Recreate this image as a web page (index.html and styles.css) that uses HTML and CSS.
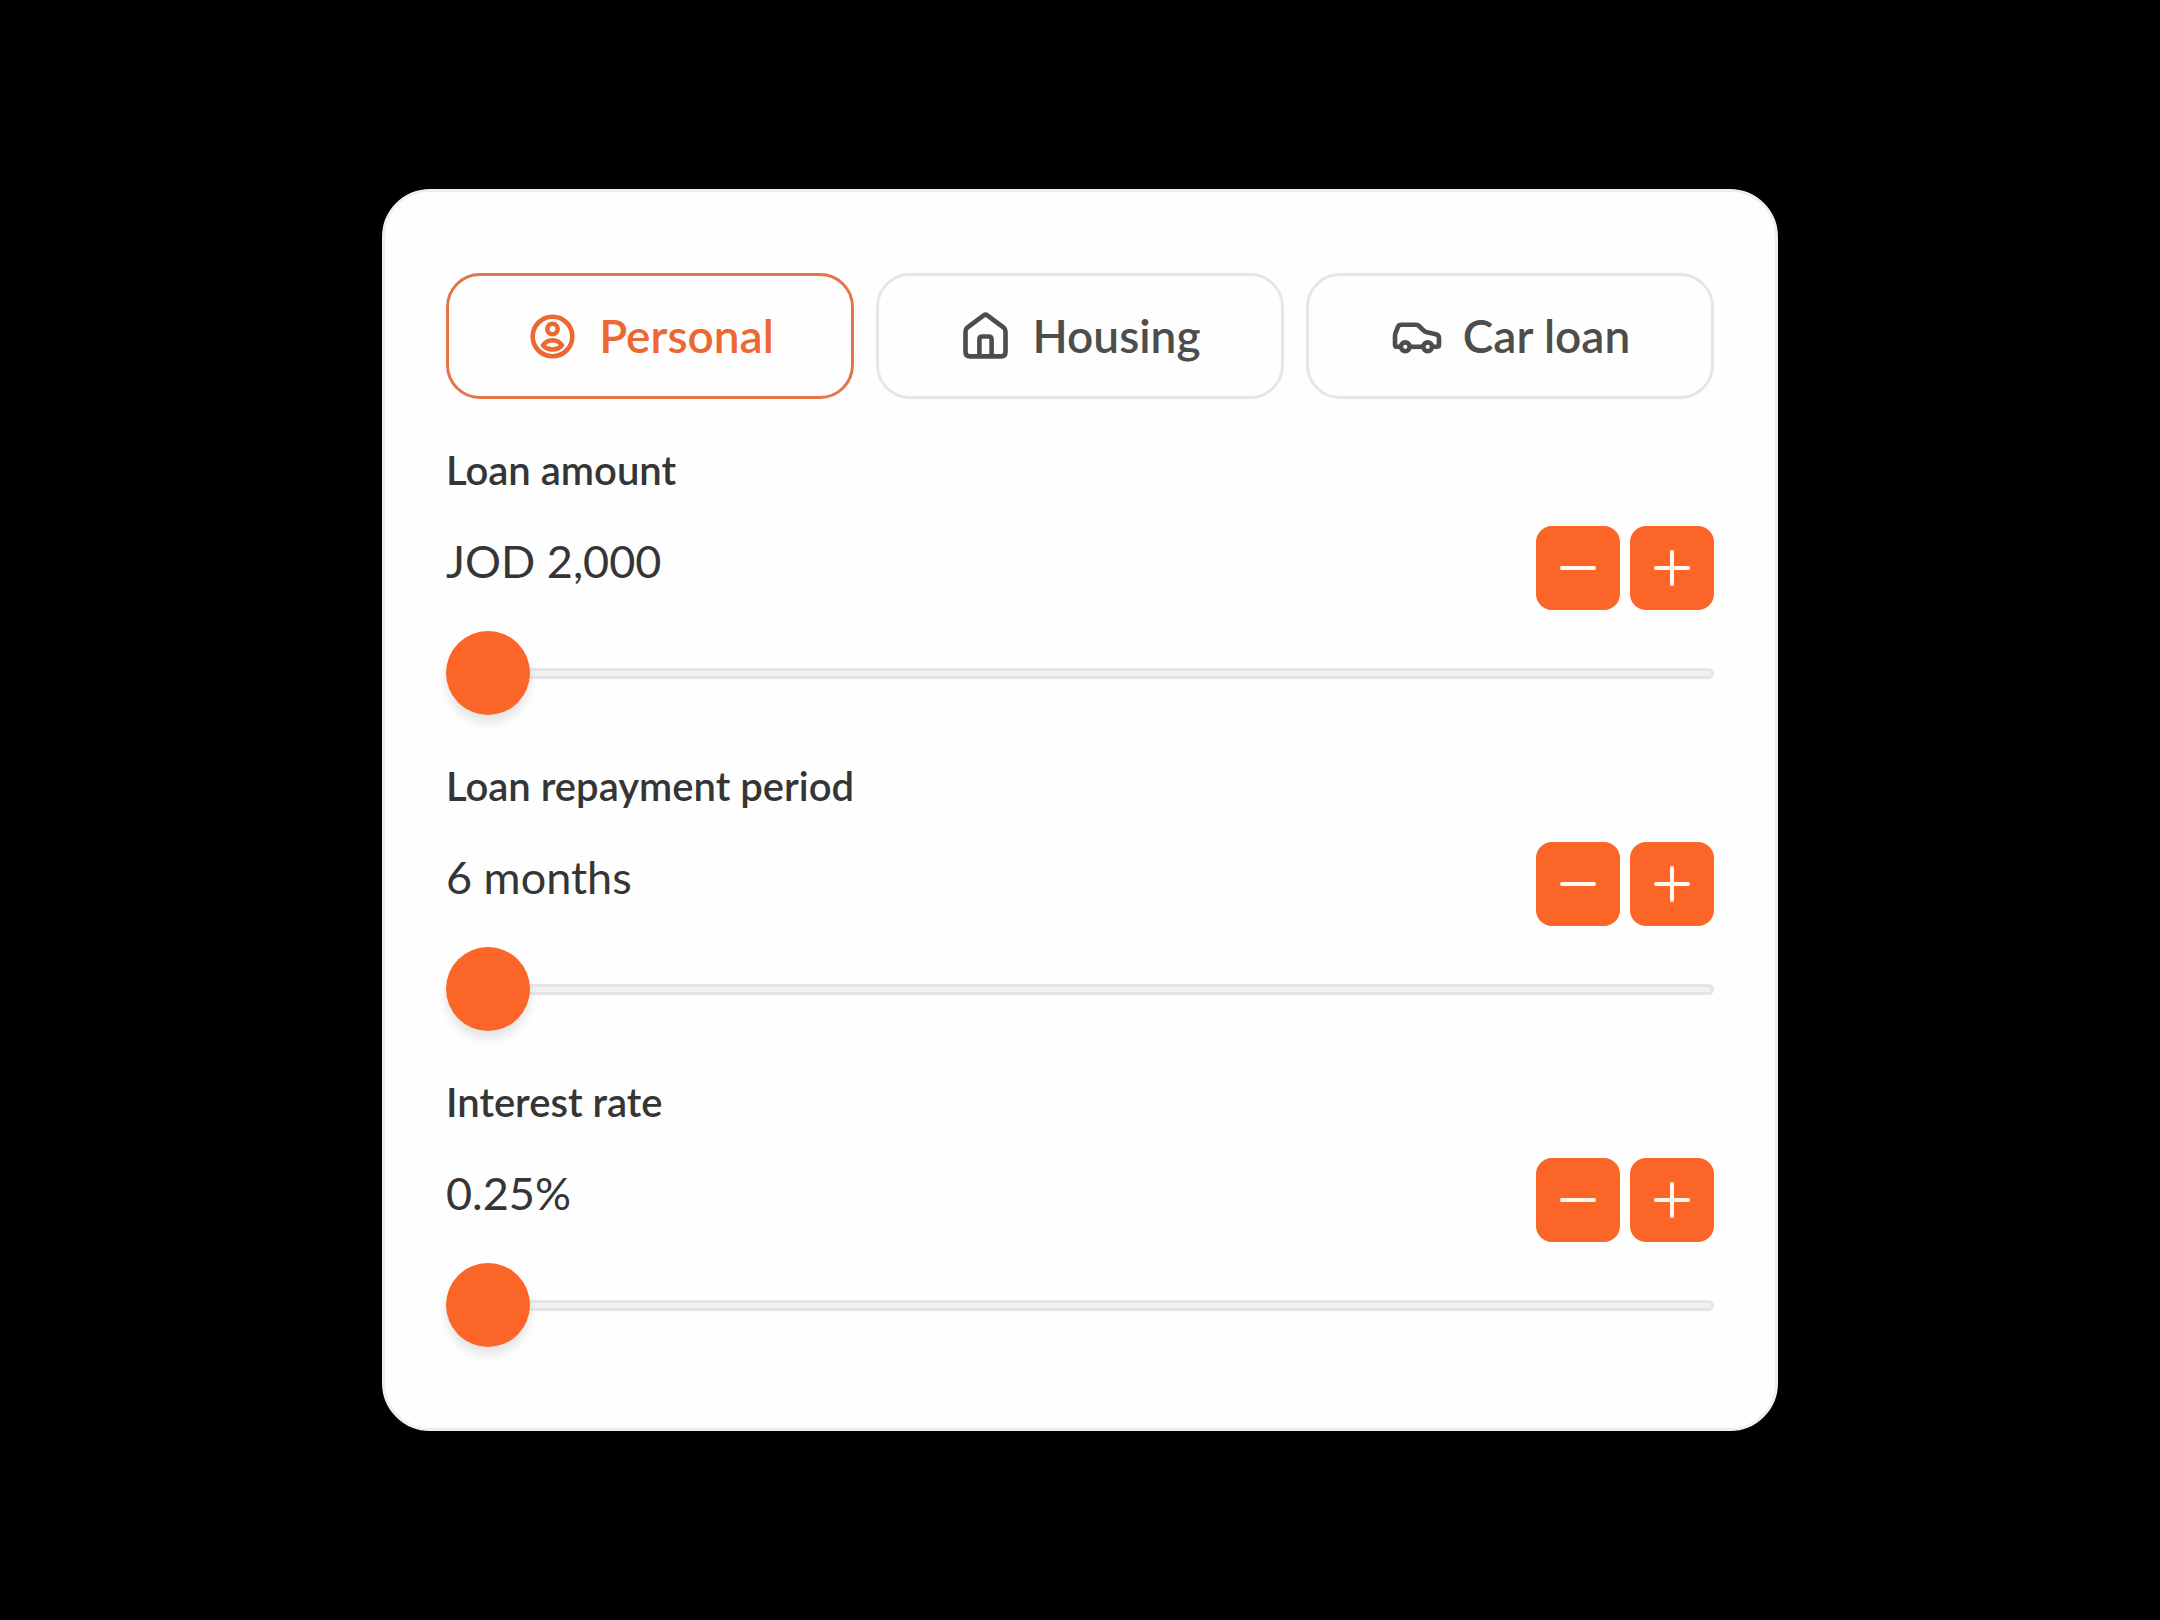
FILE: index.html
```html
<!DOCTYPE html>
<html lang="en">
<head>
<meta charset="UTF-8">
<meta name="viewport" content="width=device-width, initial-scale=1.0">
<title>Loan calculator</title>
<link rel="stylesheet" href="styles.css">
</head>
<body>

<main class="card">
  <div class="tabs">
    <button type="button" class="tab active">
      <svg class="icon" viewBox="0 0 53 53">
        <circle cx="26.5" cy="26.5" r="19.8"/>
        <circle cx="26.5" cy="19" r="5.2"/>
        <path d="M17 35.3C21.5 28.6 31.5 28.6 36 35.3C31.5 40.8 21.5 40.8 17 35.3Z"/>
      </svg>
      Personal
    </button>
    <button type="button" class="tab">
      <svg class="icon" viewBox="0 0 53 53">
        <path d="M6.5 21.5C6.5 19.8 7 18.6 8.3 17.6L24.7 5.4Q26.5 4 28.3 5.4L44.7 17.6C46 18.6 46.5 19.8 46.5 21.5V42Q46.5 46.4 42.1 46.4H10.9Q6.5 46.4 6.5 42Z"/>
        <path d="M20.4 46V29.5Q20.4 26.5 23.4 26.5H29.6Q32.6 26.5 32.6 29.5V46"/>
      </svg>
      Housing
    </button>
    <button type="button" class="tab">
      <svg class="icon" viewBox="0 0 53 53">
        <path d="M10.5 36.8H7Q5 36.8 5 34.8V26Q5 24.6 5.5 23.2L8 16.8Q8.8 14.8 11 14.8H26Q27.8 14.8 29 16L33.2 20.2Q34.8 21.8 37 22.3L45.8 24.2Q49 25 49 28V34.8Q49 36.8 47 36.8H42.5"/>
        <path d="M20 36.8H33"/>
        <circle cx="15.3" cy="36.8" r="4.4"/>
        <circle cx="37.7" cy="36.8" r="4.4"/>
      </svg>
      Car loan
    </button>
  </div>

  <section class="field">
    <label for="amount">Loan amount</label>
    <div class="row">
      <output id="amount-value" for="amount">JOD 2,000</output>
      <div class="steps">
        <button type="button" class="step" aria-label="Decrease loan amount" onclick="step('amount', -1)">
          <svg viewBox="0 0 36 36"><path d="M2 18H34"/></svg>
        </button>
        <button type="button" class="step" aria-label="Increase loan amount" onclick="step('amount', 1)">
          <svg viewBox="0 0 36 36"><path d="M2 18H34M18 2V34"/></svg>
        </button>
      </div>
    </div>
    <input type="range" id="amount" min="2000" max="50000" step="500" value="2000">
  </section>

  <section class="field">
    <label for="period">Loan repayment period</label>
    <div class="row">
      <output id="period-value" for="period">6 months</output>
      <div class="steps">
        <button type="button" class="step" aria-label="Decrease repayment period" onclick="step('period', -1)">
          <svg viewBox="0 0 36 36"><path d="M2 18H34"/></svg>
        </button>
        <button type="button" class="step" aria-label="Increase repayment period" onclick="step('period', 1)">
          <svg viewBox="0 0 36 36"><path d="M2 18H34M18 2V34"/></svg>
        </button>
      </div>
    </div>
    <input type="range" id="period" min="6" max="96" step="1" value="6">
  </section>

  <section class="field">
    <label for="rate">Interest rate</label>
    <div class="row">
      <output id="rate-value" for="rate">0.25%</output>
      <div class="steps">
        <button type="button" class="step" aria-label="Decrease interest rate" onclick="step('rate', -1)">
          <svg viewBox="0 0 36 36"><path d="M2 18H34"/></svg>
        </button>
        <button type="button" class="step" aria-label="Increase interest rate" onclick="step('rate', 1)">
          <svg viewBox="0 0 36 36"><path d="M2 18H34M18 2V34"/></svg>
        </button>
      </div>
    </div>
    <input type="range" id="rate" min="0.25" max="20" step="0.25" value="0.25">
  </section>
</main>

<script>
const formats = {
  amount: v => 'JOD ' + Number(v).toLocaleString('en-US'),
  period: v => v + ' months',
  rate: v => Number(v).toFixed(2) + '%'
};

const update = id => {
  const value = document.getElementById(id).value;
  document.getElementById(id + '-value').textContent = formats[id](value);
};

const step = (id, dir) => {
  const input = document.getElementById(id);
  if (dir > 0) input.stepUp();
  else input.stepDown();
  update(id);
};

Object.keys(formats).forEach(id => {
  document.getElementById(id).addEventListener('input', () => update(id));
});

// switch the selected loan type
const tabs = document.querySelectorAll('.tab');
tabs.forEach(tab => tab.addEventListener('click', () => {
  tabs.forEach(t => t.classList.toggle('active', t === tab));
}));
</script>

</body>
</html>
```
FILE: styles.css
```css
* {
  box-sizing: border-box;
}
body {
  margin: 0;
  min-height: 100vh;
  display: flex;
  align-items: center;
  justify-content: center;
  background-color: #000;
  color: #353535;
  font-family: Lato, sans-serif;
}
button, input {
  margin: 0;
  font-family: inherit;
}
.card {
  display: flex;
  flex-direction: column;
  gap: 47px;
  width: 90%;
  max-width: 1396px;
  padding: 81px 61px;
  background-color: #fefefe;
  border: 3px solid #efefef;
  border-radius: 48px;
}
.tabs {
  display: grid;
  grid-template-columns: repeat(3, 1fr);
  gap: 22px;
}
.tab {
  display: flex;
  align-items: center;
  justify-content: center;
  gap: 20px;
  padding: 33px 0;
  background: none;
  border: 3px solid #e6e6e6;
  border-radius: 34px;
  color: #4d4d4b;
  font-size: 46px;
  font-weight: 600;
  line-height: 54px;
  cursor: pointer;
}
.tab.active {
  border-color: #e57449;
  color: #ec6830;
}
.icon {
  width: 53px;
  height: 53px;
  fill: none;
  stroke: currentColor;
  stroke-width: 4.6;
  stroke-linejoin: round;
}
.field {
  display: flex;
  flex-direction: column;
}
label {
  margin-bottom: 32px;
  font-size: 40px;
  font-weight: 600;
  line-height: 48px;
}
.row {
  display: flex;
  align-items: flex-start;
  justify-content: space-between;
  margin-bottom: 21px;
}
output {
  font-size: 45px;
  line-height: 70px;
}
.steps {
  display: flex;
  gap: 10px;
}
.step {
  display: flex;
  align-items: center;
  justify-content: center;
  width: 84px;
  height: 84px;
  padding: 0;
  background-color: #fb6628;
  border: none;
  border-radius: 16px;
  cursor: pointer;
}
.step svg {
  width: 36px;
  height: 36px;
  fill: none;
  stroke: #fff8f0;
  stroke-width: 4;
  stroke-linecap: round;
}
input[type="range"] {
  width: 100%;
  height: 84px;
  background: none;
  -webkit-appearance: none;
  appearance: none;
}
input[type="range"]::-webkit-slider-runnable-track {
  height: 11px;
  background-color: #f1f1f1;
  border: 3px solid #e5e5e5;
  border-radius: 6px;
}
input[type="range"]::-webkit-slider-thumb {
  -webkit-appearance: none;
  width: 84px;
  height: 84px;
  margin: -40px -3px 0;
  background-color: #fb6628;
  border-radius: 50%;
  box-shadow: 0 8px 10px rgba(0, 0, 0, 0.1);
}
```
